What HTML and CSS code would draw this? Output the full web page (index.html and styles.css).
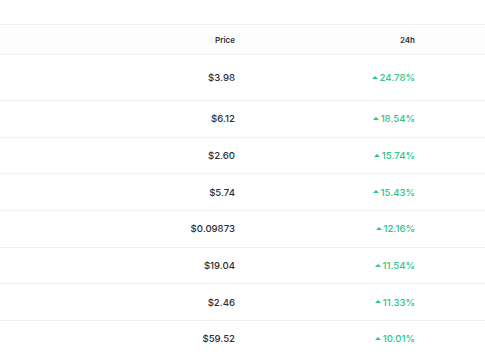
FILE: index.html
```html
<!DOCTYPE html>
<html>
<head>
<meta charset="utf-8">
<link rel="stylesheet" href="styles.css">
</head>
<body>
<div class="table">
  <div class="row head">
    <div class="name"></div>
    <div class="price">Price</div>
    <div class="change">24h</div>
    <div class="rest"></div>
  </div>
  <div class="row first">
    <div class="name"></div>
    <div class="price">$3.98</div>
    <div class="change"><span class="tri"></span>24.78%</div>
    <div class="rest"></div>
  </div>
  <div class="row">
    <div class="name"></div>
    <div class="price">$6.12</div>
    <div class="change"><span class="tri"></span>18.54%</div>
    <div class="rest"></div>
  </div>
  <div class="row">
    <div class="name"></div>
    <div class="price">$2.60</div>
    <div class="change"><span class="tri"></span>15.74%</div>
    <div class="rest"></div>
  </div>
  <div class="row">
    <div class="name"></div>
    <div class="price">$5.74</div>
    <div class="change"><span class="tri"></span>15.43%</div>
    <div class="rest"></div>
  </div>
  <div class="row">
    <div class="name"></div>
    <div class="price">$0.09873</div>
    <div class="change"><span class="tri"></span>12.16%</div>
    <div class="rest"></div>
  </div>
  <div class="row">
    <div class="name"></div>
    <div class="price">$19.04</div>
    <div class="change"><span class="tri"></span>11.54%</div>
    <div class="rest"></div>
  </div>
  <div class="row">
    <div class="name"></div>
    <div class="price">$2.46</div>
    <div class="change"><span class="tri"></span>11.33%</div>
    <div class="rest"></div>
  </div>
  <div class="row">
    <div class="name"></div>
    <div class="price">$59.52</div>
    <div class="change"><span class="tri"></span>10.01%</div>
    <div class="rest"></div>
  </div>
</div>
</body>
</html>
```
FILE: styles.css
```css
html, body {
  margin: 0;
  padding: 0;
  background: #ffffff;
}
body {
  font-family: Inter, "Noto Sans", sans-serif;
  color: #2b2e38;
  overflow: hidden;
}
.table {
  padding-top: 24px;
}
.row {
  display: grid;
  grid-template-columns: 1fr 100px 180px 70px;
  align-items: center;
  border-top: 1px solid #eff2f5;
  height: 35.7px;
}
.row.head {
  height: 29px;
  background: #fdfdfd;
}
.row.first {
  height: 45px;
}
.price, .change {
  text-align: right;
  font-size: 9.6px;
  font-weight: 500;
  white-space: nowrap;
}
.head .price, .head .change {
  font-size: 8px;
  font-weight: 600;
}
.change {
  color: #2dc58a;
  display: flex;
  justify-content: flex-end;
  align-items: center;
}
.head .change {
  color: #2b2e38;
}
.tri {
  display: inline-block;
  width: 0;
  height: 0;
  border-left: 3px solid transparent;
  border-right: 3px solid transparent;
  border-bottom: 3.5px solid #2dc58a;
  margin-right: 1.5px;
  margin-bottom: 1px;
}
```
